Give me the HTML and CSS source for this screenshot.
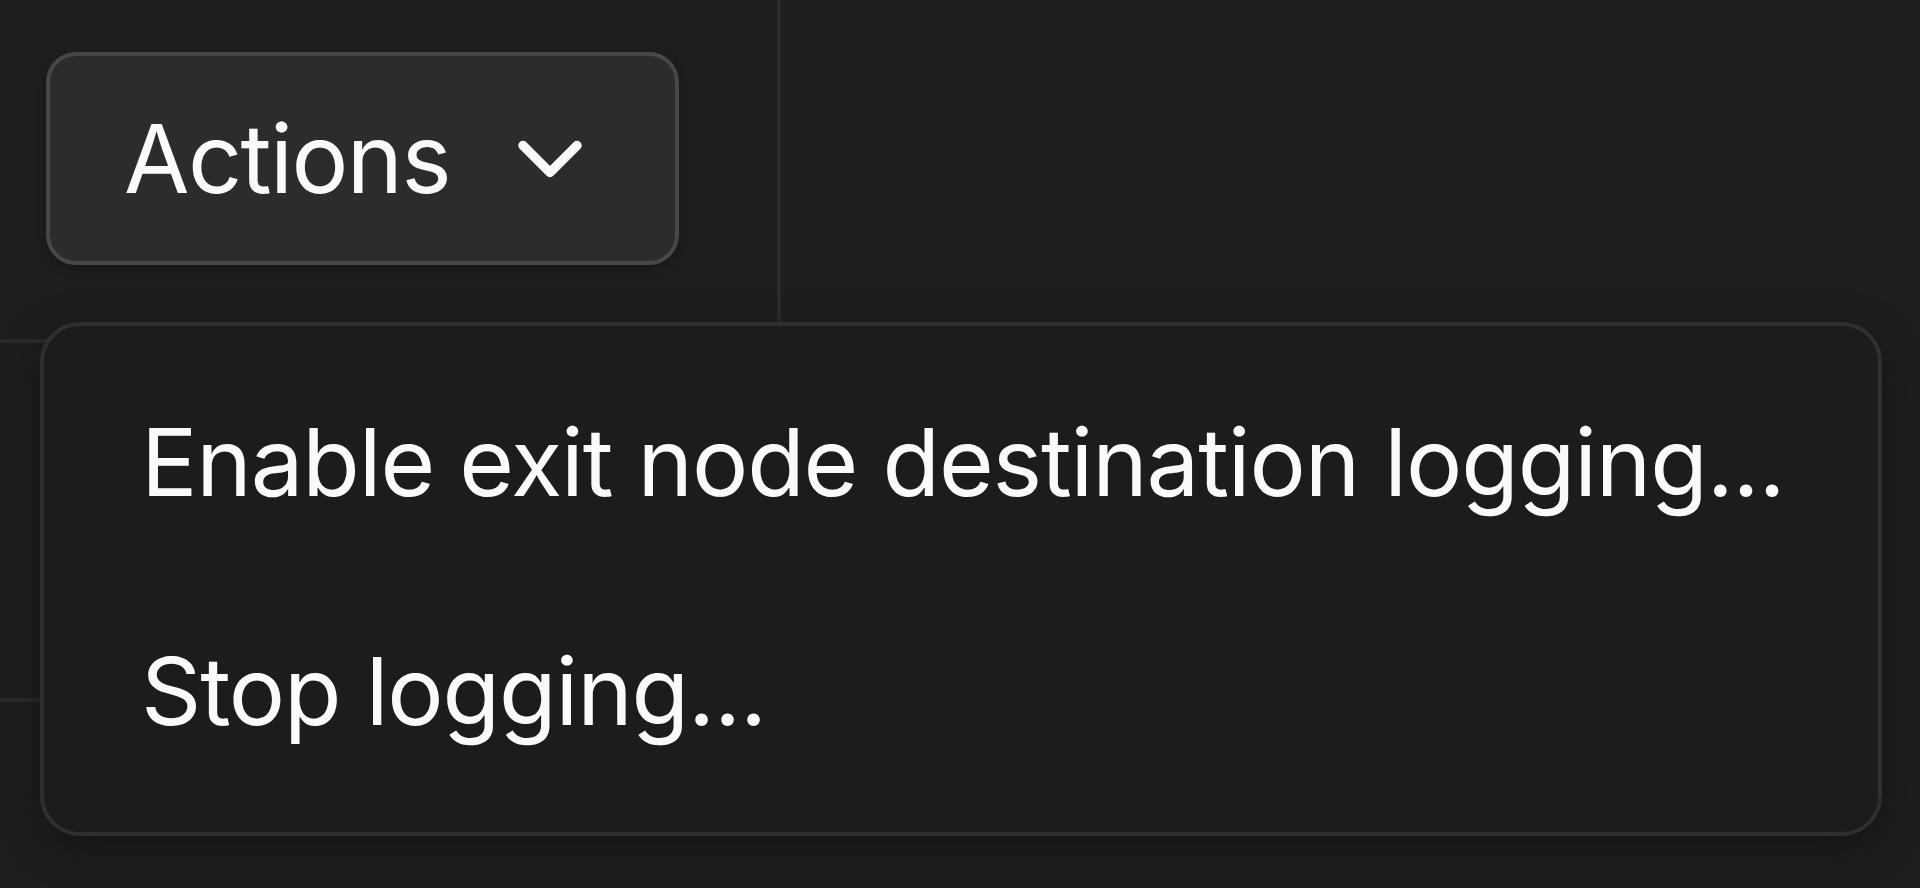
FILE: index.html
```html
<!DOCTYPE html>
<html lang="en">
<head>
    <meta charset="UTF-8">
    <meta name="viewport" content="width=device-width, initial-scale=1.0">
    <title>Actions</title>
    <link rel="stylesheet" href="styles.css">
</head>
<body>
    <div class="page">
        <!-- TABLE BEHIND THE MENU -->
        <div class="grid">
            <div class="cell cell-head">
                <button class="actions-btn" type="button">
                    <span>Actions</span>
                    <svg class="chevron" viewBox="0 0 24 24" fill="none" stroke="currentColor" stroke-width="2.1" stroke-linecap="round" stroke-linejoin="round">
                        <path d="M6 9l6 6 6-6"/>
                    </svg>
                </button>
            </div>
            <div class="cell cell-row"></div>
        </div>

        <!-- DROPDOWN -->
        <div class="menu" role="menu">
            <div class="menu-item" role="menuitem">Enable exit node destination logging...</div>
            <div class="menu-item" role="menuitem">Stop logging...</div>
        </div>
    </div>
</body>
</html>
```

FILE: styles.css
```css
body {
    font-family: Inter, 'Noto Sans', sans-serif;
    background-color: #1e1e1e;
    color: #fafafa;
    margin: 0;
    padding: 0;
    overflow: hidden;
}
.page {
    position: relative;
    width: 1920px;
    height: 888px;
}
.grid {
    display: flex;
    flex-direction: column;
    width: 781px;
}
.cell {
    box-sizing: border-box;
    border-bottom: 4px solid #2a2a2a;
}
.cell-head {
    height: 343px;
    padding: 52px 0 0 46px;
    border-right: 4px solid #2b2b2b;
}
.cell-row {
    height: 359px;
}
.actions-btn {
    display: flex;
    align-items: center;
    box-sizing: border-box;
    width: 633px;
    height: 213px;
    padding: 0 0 0 74px;
    gap: 46px;
    font-family: inherit;
    font-size: 95px;
    font-weight: 400;
    letter-spacing: -1.6px;
    color: #fafafa;
    background-color: #2c2c2c;
    border: 4px solid #474747;
    border-radius: 30px;
    box-shadow: 0 4px 10px rgba(0, 0, 0, 0.25);
    cursor: pointer;
}
.chevron {
    width: 108px;
    height: 108px;
    flex-shrink: 0;
}
.menu {
    position: absolute;
    left: 40px;
    top: 322px;
    box-sizing: border-box;
    width: 1842px;
    height: 514px;
    padding: 21px 24px 27px;
    background-color: #1c1c1c;
    border: 4px solid #2f2f2f;
    border-radius: 40px;
    box-shadow: 0 12px 40px rgba(0, 0, 0, 0.35);
}
.menu-item {
    display: flex;
    align-items: center;
    height: 229px;
    padding-left: 73px;
    font-size: 94px;
    letter-spacing: -1.15px;
    white-space: nowrap;
    cursor: pointer;
}
```
